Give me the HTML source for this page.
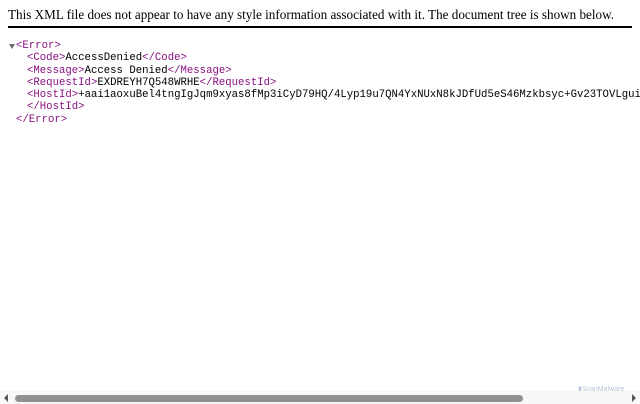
<html><head><style>
body{margin:0;width:640px;height:404px;overflow:hidden;background:#fff;position:relative}
.h{position:absolute;left:8px;top:7px;font:13.15px "Liberation Serif",serif;color:#000;white-space:nowrap}
.bar{position:absolute;left:8px;top:26px;width:624px;height:2px;background:#000}
.l{position:absolute;font:10.67px/12.3px "Liberation Mono",monospace;white-space:pre;color:#000}
.t{color:#881280}
.sb{position:absolute;left:0;top:391px;width:640px;height:13px;background:#f8f8f8}
.th{position:absolute;left:15px;top:395px;width:508px;height:7px;border-radius:4px;background:#909090}
</style></head><body>
<div class="h">This XML file does not appear to have any style information associated with it. The document tree is shown below.</div>
<div class="bar"></div>
<div style="position:absolute;left:9px;top:44px;width:0;height:0;border-left:3px solid transparent;border-right:3px solid transparent;border-top:5px solid #6e6e6e"></div>
<div class="l" style="left:16px;top:40px"><span class="t">&lt;Error&gt;</span></div>
<div class="l" style="left:27px;top:52px"><span class="t">&lt;Code&gt;</span>AccessDenied<span class="t">&lt;/Code&gt;</span></div>
<div class="l" style="left:27px;top:64.5px"><span class="t">&lt;Message&gt;</span>Access Denied<span class="t">&lt;/Message&gt;</span></div>
<div class="l" style="left:27px;top:77px"><span class="t">&lt;RequestId&gt;</span>EXDREYH7Q548WRHE<span class="t">&lt;/RequestId&gt;</span></div>
<div class="l" style="left:27px;top:89px"><span class="t">&lt;HostId&gt;</span>+aai1aoxuBel4tngIgJqm9xyas8fMp3iCyD79HQ/4Lyp19u7QN4YxNUxN8kJDfUd5eS46Mzkbsyc+Gv23TOVLgui</div>
<div class="l" style="left:27px;top:101px"><span class="t">&lt;/HostId&gt;</span></div>
<div class="l" style="left:16px;top:114px"><span class="t">&lt;/Error&gt;</span></div>
<div style="position:absolute;left:578px;top:385px;font:7px 'Liberation Sans',sans-serif;color:#b8c4d8">▮ScanMalware</div>
<div class="sb"></div>
<div class="th"></div>
<div style="position:absolute;left:4px;top:394px;width:0;height:0;border-top:4px solid transparent;border-bottom:4px solid transparent;border-right:4px solid #555"></div>
<div style="position:absolute;left:632px;top:394px;width:0;height:0;border-top:4px solid transparent;border-bottom:4px solid transparent;border-left:4px solid #555"></div>
</body></html>
